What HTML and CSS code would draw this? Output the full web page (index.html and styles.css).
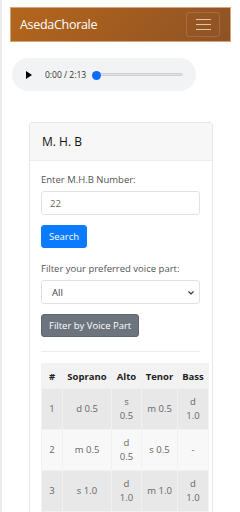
FILE: index.html
```html
<!DOCTYPE html>
<html>
<head>
<meta charset="utf-8">
<link rel="stylesheet" href="styles.css">
</head>
<body>
<div class="page">
  <nav class="navbar">
    <span class="brand">AsedaChorale</span>
    <button class="toggler" aria-label="menu"><span></span><span></span><span></span></button>
  </nav>

  <div class="player">
    <svg class="play" width="6" height="8" viewBox="0 0 6 8"><path d="M0 0 L6 4 L0 8 Z" fill="#000"/></svg>
    <span class="time">0:00 / 2:13</span>
    <div class="track"><div class="thumb"></div></div>
  </div>

  <div class="card">
    <div class="card-header">M. H. B</div>
    <div class="card-body">
      <label class="label">Enter M.H.B Number:</label>
      <div class="field">22</div>
      <button class="btn btn-primary">Search</button>

      <label class="label label-2">Filter your preferred voice part:</label>
      <div class="field select">All
        <svg class="chev" width="6" height="4" viewBox="0 0 6 4"><path d="M0.5 0.5 L3 3 L5.5 0.5" stroke="#333" stroke-width="1.1" fill="none"/></svg>
      </div>
      <button class="btn btn-secondary">Filter by Voice Part</button>

      <hr class="rule">

      <table class="notes">
        <colgroup>
          <col class="c1"><col class="c2"><col class="c3"><col class="c4"><col class="c5">
        </colgroup>
        <thead>
          <tr><th>#</th><th>Soprano</th><th>Alto</th><th>Tenor</th><th>Bass</th></tr>
        </thead>
        <tbody>
          <tr class="odd"><td>1</td><td class="nw">d 0.5</td><td>s 0.5</td><td class="nw">m 0.5</td><td>d 1.0</td></tr>
          <tr class="even"><td>2</td><td class="nw">m 0.5</td><td>d 0.5</td><td class="nw">s 0.5</td><td>-</td></tr>
          <tr class="odd"><td>3</td><td class="nw">s 1.0</td><td>d 1.0</td><td class="nw">m 1.0</td><td>d 1.0</td></tr>
        </tbody>
      </table>
    </div>
  </div>
</div>
</body>
</html>
```

FILE: styles.css
```css
* { box-sizing: border-box; }
html, body { margin: 0; padding: 0; background: #fff; }
body {
  font-family: "Open Sans", "Noto Sans", sans-serif;
  color: #212529;
  overflow: hidden;
}
.page {
  border-left: 2px solid #ececec;
  min-height: 512px;
  padding-top: 7px;
}
.navbar {
  margin: 0 9px 0 8px;
  height: 35px;
  background: linear-gradient(135deg, #b4661d 0%, #a25c20 50%, #8e5226 100%);
  border: 1px solid #d4a57a;
  display: flex;
  align-items: center;
  justify-content: space-between;
  padding: 0 10px 0 9px;
}
.brand {
  color: #fff;
  font-size: 12.5px;
  letter-spacing: -0.3px;
}
.toggler {
  width: 34px;
  height: 25px;
  border: 1px solid rgba(255,255,255,0.14);
  border-radius: 3px;
  background: transparent;
  display: flex;
  flex-direction: column;
  align-items: center;
  justify-content: center;
  gap: 3.6px;
  padding: 0;
}
.toggler span {
  display: block;
  width: 15px;
  height: 1.4px;
  background: #e6c3a4;
}
.player {
  margin: 16px 0 0 10px;
  width: 184px;
  height: 33px;
  border-radius: 17px;
  background: #f1f3f4;
  display: flex;
  align-items: center;
  padding-left: 14px;
}
.play { flex: none; }
.time {
  margin-left: 13px;
  font-size: 8.5px;
  color: #333;
  white-space: nowrap;
}
.track {
  position: relative;
  margin-left: 9px;
  width: 88px;
  height: 3px;
  border-radius: 2px;
  background: #e2e2e2;
  border: 0.5px solid #cfcfcf;
}
.thumb {
  position: absolute;
  left: -4px;
  top: -3.5px;
  width: 9px;
  height: 9px;
  border-radius: 50%;
  background: #0b6cff;
}
.card {
  margin: 31px 0 0 27px;
  width: 184px;
  border: 1px solid #e7e7e7;
  border-radius: 3px;
  min-height: 400px;
}
.card-header {
  height: 38px;
  background: #f7f7f7;
  border-bottom: 1px solid #ececec;
  display: flex;
  align-items: center;
  padding-left: 12px;
  font-size: 12px;
  color: #111;
}
.card-body {
  padding: 12px 11px 0 11px;
}
.label {
  display: block;
  font-size: 9.5px;
  color: #555;
  line-height: 14px;
  margin-bottom: 4px;
  white-space: nowrap;
}
.label-2 { margin-top: 14px; }
.field {
  position: relative;
  width: 159px;
  height: 24px;
  border: 1px solid #e2e2e2;
  border-radius: 3px;
  font-size: 9.5px;
  color: #666;
  display: flex;
  align-items: center;
  padding-left: 8px;
}
.select { padding-left: 10px; color: #444; }
.chev {
  position: absolute;
  right: 5px;
  top: 10px;
}
.btn {
  display: block;
  margin-top: 10px;
  height: 23px;
  border-radius: 3px;
  font-family: inherit;
  font-size: 9.5px;
  color: #fff;
  padding: 0 7px;
}
.btn-primary {
  background: #0a7bff;
  border: 1px solid #0a7bff;
}
.btn-secondary {
  background: #6c757d;
  border: 1px solid #5f676e;
}
.rule {
  margin: 14px 0 0 0;
  width: 159px;
  border: 0;
  border-top: 1px solid #ececec;
}
.notes {
  margin-top: 11px;
  border-collapse: collapse;
  table-layout: fixed;
  width: 167px;
  font-size: 9.5px;
  text-align: center;
}
.c1 { width: 21px; }
.c2 { width: 49px; }
.c3 { width: 30px; }
.c4 { width: 36px; }
.c5 { width: 31px; }
.notes th, .notes td {
  border: 1px solid #f1f1f1;
}
.notes th {
  background: #f2f2f2;
  color: #222;
  font-weight: 700;
  height: 25px;
  padding: 0;
  white-space: nowrap;
}
.notes td {
  color: #666;
  line-height: 14px;
  padding: 6px 6px;
  height: 40px;
}
.notes td.nw { white-space: nowrap; padding: 6px 2px; }
.notes td:first-child { padding: 6px 2px; }
.odd td { background: #e8e8e8; }
.even td { background: #f8f8f8; }
```
